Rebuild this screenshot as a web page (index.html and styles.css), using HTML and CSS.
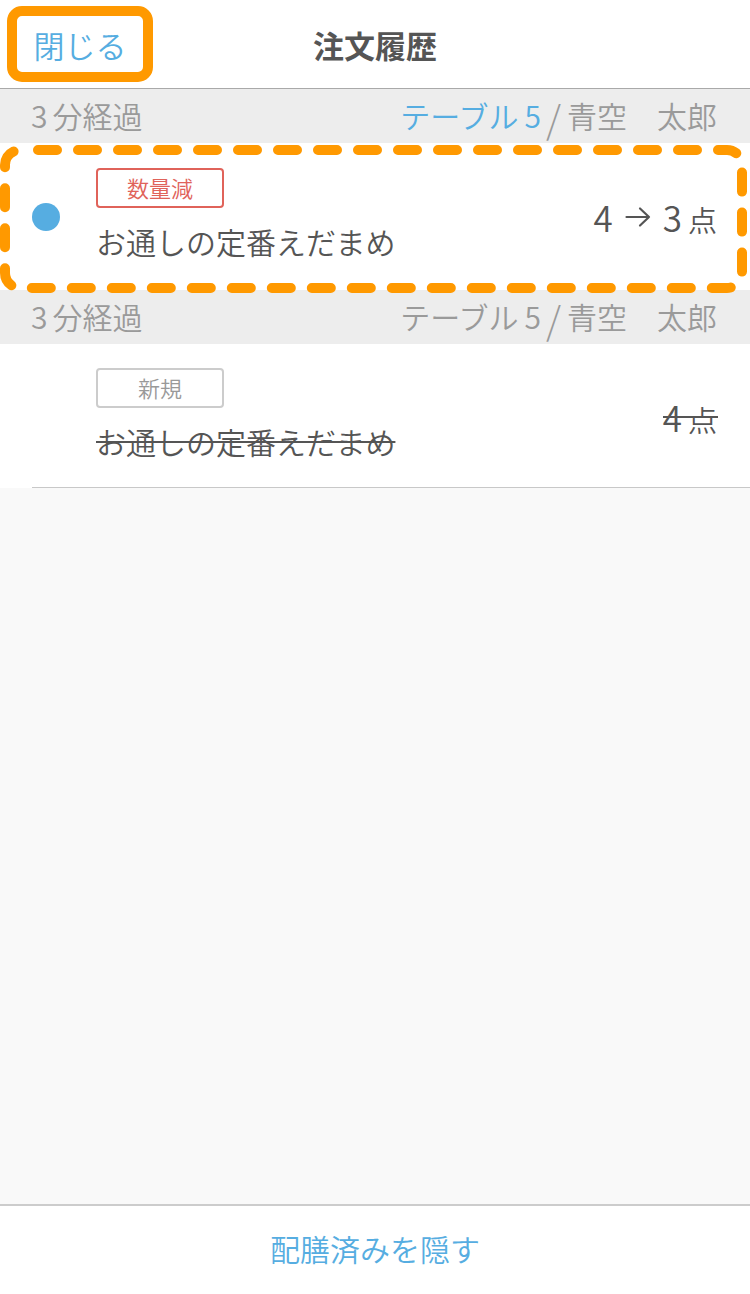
FILE: index.html
```html
<!DOCTYPE html>
<html lang="ja">
<head>
<meta charset="utf-8">
<title>注文履歴</title>
<link rel="stylesheet" href="styles.css">
</head>
<body>
<header class="topbar">
  <button class="close-btn">閉じる</button>
  <h1 class="title">注文履歴</h1>
  <span class="spacer"></span>
</header>

<main class="list">
  <div class="group">
    <div class="group-head">
      <span class="elapsed"><span class="d-after">3</span>分経過</span>
      <span class="where"><span class="table active">テーブル<span class="d-before">5</span></span><span class="slash">/</span><span class="who">青空　太郎</span></span>
    </div>
    <div class="item item-first">
      <div class="mark"><span class="dot"></span></div>
      <div class="body">
        <span class="badge badge-red">数量減</span>
        <div class="name">お通しの定番えだまめ</div>
      </div>
      <div class="qty">
        <span class="num">4</span>
        <svg class="arrow" width="26" height="22" viewBox="0 0 26 22"><path d="M1.5 11 H24 M15 2.5 L24 11 L15 19.5" fill="none" stroke="#555" stroke-width="2.2" stroke-linecap="round" stroke-linejoin="round"/></svg>
        <span class="num">3</span><span class="unit">点</span>
      </div>
      <svg class="highlight" width="750" height="150" viewBox="0 0 750 150"><rect x="5" y="5" width="737" height="138" rx="15" ry="15" fill="none" stroke="#ff9900" stroke-width="10" stroke-linecap="round" stroke-dasharray="19 21" stroke-dashoffset="22"/></svg>
    </div>
  </div>

  <div class="group">
    <div class="group-head">
      <span class="elapsed"><span class="d-after">3</span>分経過</span>
      <span class="where"><span class="table">テーブル<span class="d-before">5</span></span><span class="slash">/</span><span class="who">青空　太郎</span></span>
    </div>
    <div class="item item-second">
      <div class="mark"></div>
      <div class="body">
        <span class="badge badge-gray">新規</span>
        <div class="name struck">お通しの定番えだまめ</div>
      </div>
      <div class="qty struck-qty">
        <span class="num">4</span><span class="unit">点</span>
      </div>
    </div>
  </div>
</main>

<footer class="bottombar">
  <span class="hide-link">配膳済みを隠す</span>
</footer>
</body>
</html>
```

FILE: styles.css
```css
* { box-sizing: border-box; }

html, body {
  margin: 0;
  padding: 0;
}

body {
  width: 750px;
  height: 1294px;
  display: flex;
  flex-direction: column;
  background: #f9f9f9;
  font-family: "Noto Sans CJK JP", "Noto Sans", sans-serif;
  font-weight: 350;
  color: #555;
  overflow: hidden;
}

.topbar {
  height: 89px;
  flex: none;
  background: #fff;
  border-bottom: 1px solid #a9a9a9;
  display: grid;
  grid-template-columns: 1fr auto 1fr;
  align-items: center;
}

.close-btn {
  justify-self: start;
  margin-left: 7px;
  width: 146px;
  height: 76px;
  border: 10px solid #ff9900;
  border-radius: 15px;
  background: #fff;
  color: #56ade1;
  font-family: inherit;
  font-weight: 350;
  font-size: 31px;
  line-height: 1;
  padding: 0;
  display: flex;
  align-items: center;
  justify-content: center;
}

.title {
  margin: 0;
  font-size: 31px;
  font-weight: bold;
  color: #555;
  line-height: 1;
}

.list {
  flex: 1;
  display: flex;
  flex-direction: column;
}

.group-head {
  height: 54px;
  background: #ededed;
  display: flex;
  align-items: center;
  justify-content: space-between;
  padding: 0 33px 2px 31px;
  font-size: 30px;
  color: #9a9a9a;
  line-height: 1;
}

.d-after { margin-right: 5px; }
.d-before { margin-left: 6px; }

.where {
  display: flex;
  align-items: center;
}

.table.active { color: #56ade1; }

.slash {
  font-size: 38px;
  font-weight: 300;
  margin: 6px 6px 0 5px;
  color: #9a9a9a;
}

.item {
  position: relative;
  background: #fff;
  display: flex;
  align-items: flex-start;
  padding-top: 25px;
}

.item-first { height: 147px; }

.item-second {
  height: 144px;
  padding-top: 24px;
}

.item-second::after {
  content: "";
  position: absolute;
  left: 32px;
  right: 0;
  bottom: 0;
  height: 1px;
  background: #c8c8c8;
}

.mark {
  width: 96px;
  align-self: stretch;
  display: flex;
  align-items: center;
  padding-left: 32px;
  margin-top: -25px;
}

.dot {
  width: 28px;
  height: 28px;
  border-radius: 50%;
  background: #56ade1;
}

.body {
  flex: 1;
  display: flex;
  flex-direction: column;
  align-items: flex-start;
}

.badge {
  width: 128px;
  height: 40px;
  border: 2px solid;
  border-radius: 4px;
  display: flex;
  align-items: center;
  justify-content: center;
  font-size: 22px;
  line-height: 1;
  padding-bottom: 2px;
}

.badge-red {
  border-color: #e0635a;
  color: #e0635a;
}

.badge-gray {
  border-color: #cccccc;
  color: #999;
}

.name {
  margin-top: 13px;
  font-size: 30px;
  line-height: 40px;
  color: #555;
}

.struck {
  text-decoration: line-through;
  text-decoration-thickness: 2px;
  text-decoration-color: #555;
}

.qty {
  align-self: center;
  margin-top: -25px;
  padding-right: 33px;
  display: flex;
  align-items: baseline;
  color: #555;
  line-height: 1;
}

.item-second .qty { margin-top: -24px; }

.num {
  font-size: 35px;
}

.arrow {
  margin: 0 12px 0 12px;
  align-self: center;
}

.unit {
  font-size: 29px;
  margin-left: 6px;
}

.struck-qty {
  position: relative;
}

.struck-qty::after {
  content: "";
  position: absolute;
  left: 0;
  right: 32px;
  top: 50%;
  margin-top: 0;
  height: 2px;
  background: #555;
}

.highlight {
  position: absolute;
  left: 0;
  top: 2px;
  pointer-events: none;
}

.bottombar {
  flex: none;
  height: 90px;
  background: #fff;
  border-top: 2px solid #cccccc;
  display: flex;
  align-items: center;
  justify-content: center;
  padding-bottom: 4px;
}

.hide-link {
  font-size: 30px;
  color: #56ade1;
  line-height: 1;
}
```
